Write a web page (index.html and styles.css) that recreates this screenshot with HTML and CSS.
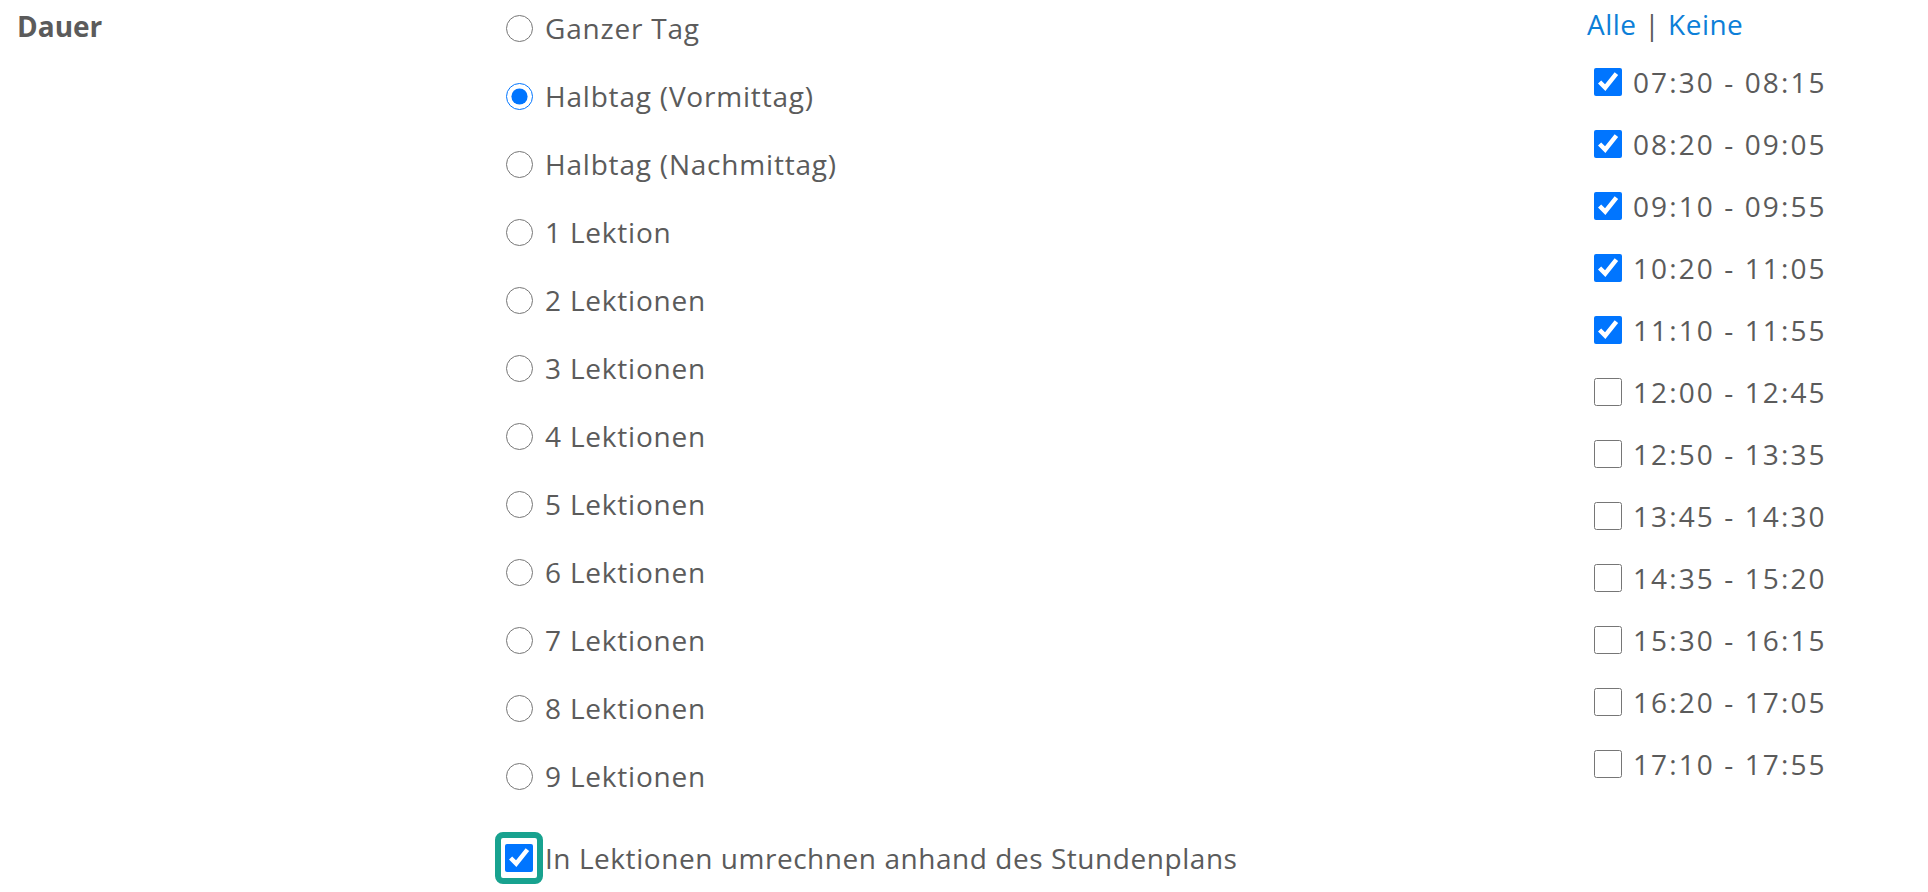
FILE: index.html
```html
<!DOCTYPE html>
<html lang="de">
<head>
<meta charset="utf-8">
<title>Dauer</title>
<link rel="stylesheet" href="styles.css">
</head>
<body>
<div class="form-row">
  <div class="label">Dauer</div>
  <div class="options">
    <label class="opt"><input type="radio" name="dauer"><span>Ganzer Tag</span></label>
    <label class="opt"><input type="radio" name="dauer" checked><span>Halbtag (Vormittag)</span></label>
    <label class="opt"><input type="radio" name="dauer"><span>Halbtag (Nachmittag)</span></label>
    <label class="opt"><input type="radio" name="dauer"><span>1 Lektion</span></label>
    <label class="opt"><input type="radio" name="dauer"><span>2 Lektionen</span></label>
    <label class="opt"><input type="radio" name="dauer"><span>3 Lektionen</span></label>
    <label class="opt"><input type="radio" name="dauer"><span>4 Lektionen</span></label>
    <label class="opt"><input type="radio" name="dauer"><span>5 Lektionen</span></label>
    <label class="opt"><input type="radio" name="dauer"><span>6 Lektionen</span></label>
    <label class="opt"><input type="radio" name="dauer"><span>7 Lektionen</span></label>
    <label class="opt"><input type="radio" name="dauer"><span>8 Lektionen</span></label>
    <label class="opt"><input type="radio" name="dauer"><span>9 Lektionen</span></label>
    <label class="convert"><span class="focus-ring"><input type="checkbox" checked></span><span>In Lektionen umrechnen anhand des Stundenplans</span></label>
  </div>
  <div class="times">
    <div class="links"><a href="#">Alle</a> | <a href="#">Keine</a></div>
    <label class="time"><input type="checkbox" checked><span>07:30 - 08:15</span></label>
    <label class="time"><input type="checkbox" checked><span>08:20 - 09:05</span></label>
    <label class="time"><input type="checkbox" checked><span>09:10 - 09:55</span></label>
    <label class="time"><input type="checkbox" checked><span>10:20 - 11:05</span></label>
    <label class="time"><input type="checkbox" checked><span>11:10 - 11:55</span></label>
    <label class="time"><input type="checkbox"><span>12:00 - 12:45</span></label>
    <label class="time"><input type="checkbox"><span>12:50 - 13:35</span></label>
    <label class="time"><input type="checkbox"><span>13:45 - 14:30</span></label>
    <label class="time"><input type="checkbox"><span>14:35 - 15:20</span></label>
    <label class="time"><input type="checkbox"><span>15:30 - 16:15</span></label>
    <label class="time"><input type="checkbox"><span>16:20 - 17:05</span></label>
    <label class="time"><input type="checkbox"><span>17:10 - 17:55</span></label>
  </div>
</div>
</body>
</html>
```
FILE: styles.css
```css
html, body {
  margin: 0;
  padding: 0;
  background: #ffffff;
}
body {
  font-family: "Open Sans", "Noto Sans", sans-serif;
  font-size: 28px;
  color: #5b5b5b;
}
.form-row {
  display: flex;
  align-items: flex-start;
}
.label {
  width: 506px;
  box-sizing: border-box;
  padding-left: 17px;
  padding-top: 6px;
  line-height: 40px;
  font-weight: 700;
}
.options {
  width: 1081px;
  display: flex;
  flex-direction: column;
  gap: 28px;
  padding-top: 8px;
  letter-spacing: 0.8px;
}
.opt, .time {
  display: flex;
  align-items: center;
  height: 40px;
  line-height: 40px;
}
.opt input {
  width: 27px;
  height: 27px;
  margin: 0 12px 0 0;
  accent-color: #0075ff;
}
.convert {
  display: flex;
  align-items: center;
  margin-top: 8px;
  margin-left: -11px;
  line-height: 40px;
  letter-spacing: 0.55px;
}
.focus-ring {
  display: flex;
  border: 6px solid #18a28f;
  border-radius: 8px;
  padding: 6px 4px;
  margin-right: 2px;
}
.focus-ring input {
  width: 28px;
  height: 28px;
  margin: 0;
  accent-color: #0075ff;
}
.times {
  display: flex;
  flex-direction: column;
  gap: 22px;
  padding-top: 4px;
}
.links {
  line-height: 40px;
  height: 40px;
  margin-bottom: -3px;
  letter-spacing: 0.5px;
}
.links a {
  color: #0d7fd8;
  text-decoration: none;
}
.time {
  transform: translateY(-1px);
}
.time span {
  letter-spacing: 2.1px;
}
.time input {
  width: 28px;
  height: 28px;
  margin: 0 11px 0 7px;
  accent-color: #0075ff;
}
```
